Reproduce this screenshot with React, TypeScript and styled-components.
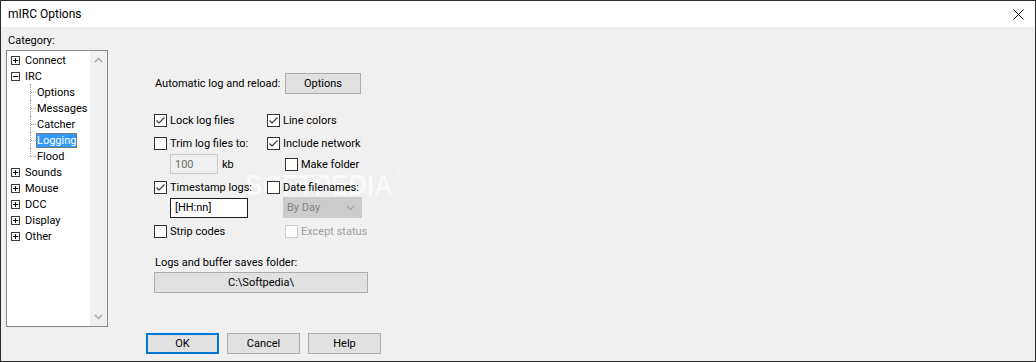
import React from 'react';
import styled, { createGlobalStyle } from 'styled-components';

const GlobalStyle = createGlobalStyle`
    html, body {
        margin: 0;
        padding: 0;
        background: #f0f0f0;
    }
`;

const Window = styled.div`
    position: relative;
    width: 1036px;
    height: 362px;
    box-sizing: border-box;
    border: 1px solid #2b2b2b;
    background: #f0f0f0;
    display: flex;
    flex-direction: column;
    font-family: Roboto, 'Noto Sans', sans-serif;
    font-size: 11px;
    color: #000;
    overflow: hidden;
`;

const TitleBar = styled.div`
    height: 26px;
    background: #fff;
    display: flex;
    align-items: center;
    justify-content: space-between;
    padding-left: 7px;
    flex-shrink: 0;
`;

const Title = styled.span`
    font-size: 12px;
`;

const CloseButton = styled.div`
    width: 46px;
    height: 26px;
    display: flex;
    align-items: center;
    justify-content: center;
    margin-right: -6px;
`;

const Body = styled.div`
    position: relative;
    z-index: 1;
    flex: 1;
    display: flex;
    flex-direction: column;
`;

const Main = styled.div`
    display: flex;
    height: 300px;
`;

const LeftCol = styled.div`
    width: 102px;
    padding: 6px 0 0 5px;
    display: flex;
    flex-direction: column;
`;

const CategoryLabel = styled.div`
    height: 16px;
    line-height: 16px;
    padding-left: 2px;
    margin-bottom: 1px;
`;

const TreeBox = styled.div`
    height: 277px;
    box-sizing: border-box;
    border: 1px solid #828790;
    background: #fff;
    display: flex;
`;

const TreeList = styled.div`
    flex: 1;
    padding-top: 1px;
    display: flex;
    flex-direction: column;
`;

const TreeRow = styled.div`
    height: 16px;
    display: flex;
    align-items: center;
`;

const Expander = styled.svg`
    margin-left: 4px;
    flex-shrink: 0;
`;

const Connector = styled.span<{ $last?: boolean }>`
    position: relative;
    align-self: flex-start;
    margin-left: 23px;
    width: 6px;
    height: ${(p) => (p.$last ? '8px' : '16px')};
    border-left: 1px dotted #a0a0a0;
    box-sizing: border-box;
    &::after {
        content: '';
        position: absolute;
        left: 0;
        top: 8px;
        width: 5px;
        border-top: 1px dotted #a0a0a0;
    }
`;

const TreeLabel = styled.span<{ $selected?: boolean; $root?: boolean }>`
    margin-left: ${(p) => (p.$root ? '4px' : '0')};
    padding: 0 1px;
    height: 15px;
    line-height: 15px;
    box-sizing: border-box;
    white-space: nowrap;
    background: ${(p) => (p.$selected ? '#3399ff' : 'transparent')};
    color: ${(p) => (p.$selected ? '#fff' : '#000')};
    outline: ${(p) => (p.$selected ? '1px dotted #b0620d' : 'none')};
    outline-offset: -1px;
`;

const ScrollBar = styled.div`
    width: 17px;
    background: #f0f0f0;
    display: flex;
    flex-direction: column;
    justify-content: space-between;
    align-items: center;
    padding: 6px 0;
`;

const RightPane = styled.div`
    margin-left: 46px;
    padding-top: 46px;
    display: flex;
    flex-direction: column;
    width: 240px;
`;

const Row = styled.div<{ $mt?: number; $h?: number }>`
    margin-top: ${(p) => p.$mt ?? 0}px;
    height: ${(p) => p.$h ?? 20}px;
    display: grid;
    grid-template-columns: 113px 1fr;
    align-items: center;
`;

const Cell = styled.div<{ $indent?: number }>`
    display: flex;
    align-items: center;
    padding-left: ${(p) => p.$indent ?? 0}px;
    white-space: nowrap;
`;

const PlainText = styled.div<{ $mt?: number }>`
    margin-top: ${(p) => p.$mt ?? 0}px;
    height: 16px;
    line-height: 16px;
    padding-left: 1px;
    white-space: nowrap;
`;

const Box = styled.span<{ $disabled?: boolean }>`
    width: 13px;
    height: 13px;
    box-sizing: border-box;
    border: 1px solid ${(p) => (p.$disabled ? '#cccccc' : '#333333')};
    background: #fff;
    display: inline-flex;
    align-items: center;
    justify-content: center;
    flex-shrink: 0;
`;

const CheckText = styled.span<{ $disabled?: boolean }>`
    margin-left: 3px;
    color: ${(p) => (p.$disabled ? '#a0a0a0' : '#000')};
`;

const Button = styled.div<{ $w: number; $default?: boolean }>`
    width: ${(p) => p.$w}px;
    height: 21px;
    box-sizing: border-box;
    background: #e1e1e1;
    border: ${(p) => (p.$default ? '2px solid #0078d7' : '1px solid #adadad')};
    display: flex;
    align-items: center;
    justify-content: center;
    white-space: nowrap;
`;

const TextInput = styled.div<{ $w: number; $disabled?: boolean }>`
    width: ${(p) => p.$w}px;
    height: 20px;
    box-sizing: border-box;
    border: 1px solid ${(p) => (p.$disabled ? '#cccccc' : '#1e1e1e')};
    background: ${(p) => (p.$disabled ? '#f0f0f0' : '#fff')};
    color: ${(p) => (p.$disabled ? '#6d6d6d' : '#000')};
    display: flex;
    align-items: center;
    padding-left: 4px;
`;

const Unit = styled.span`
    margin-left: 4px;
`;

const Select = styled.div`
    width: 79px;
    height: 21px;
    box-sizing: border-box;
    margin-left: 16px;
    background: #cccccc;
    border: 1px solid #cccccc;
    color: #838383;
    display: flex;
    align-items: center;
    justify-content: space-between;
    padding: 0 6px 0 3px;
`;

const Footer = styled.div`
    margin-top: 6px;
    padding-left: 145px;
    display: flex;
    gap: 8px;
`;

const Watermark = styled.div`
    position: absolute;
    z-index: 0;
    left: 244px;
    top: 169px;
    font-family: 'Liberation Sans', Arial, sans-serif;
    font-weight: bold;
    font-size: 30px;
    line-height: 30px;
    white-space: nowrap;
    color: rgba(255, 255, 255, 0.85);
    text-shadow: 0 0 1px rgba(0, 0, 0, 0.08);
    transform: scaleX(0.86);
    transform-origin: left top;
    pointer-events: none;
`;

const Reg = styled.span`
    font-size: 10px;
    vertical-align: top;
    line-height: 10px;
    margin-left: 3px;
`;

const PlusBox = ({ open }: { open?: boolean }) => (
    <Expander width="9" height="9" viewBox="0 0 9 9">
        <rect x="0.5" y="0.5" width="8" height="8" fill="#fff" stroke="#3c3c3c" />
        <line x1="2" y1="4.5" x2="7" y2="4.5" stroke="#000" />
        {!open && <line x1="4.5" y1="2" x2="4.5" y2="7" stroke="#000" />}
    </Expander>
);

const Check = ({
    checked,
    disabled,
    label,
}: {
    checked?: boolean;
    disabled?: boolean;
    label: string;
}) => (
    <>
        <Box $disabled={disabled}>
            {checked && (
                <svg width="11" height="11" viewBox="0 0 11 11">
                    <polyline
                        points="1.5,5.5 4,8 9.5,2.5"
                        fill="none"
                        stroke="#333"
                        strokeWidth="1.1"
                    />
                </svg>
            )}
        </Box>
        <CheckText $disabled={disabled}>{label}</CheckText>
    </>
);

const Chevron = ({ up, color }: { up?: boolean; color: string }) => (
    <svg width="9" height="6" viewBox="0 0 9 6">
        <polyline
            points={up ? '1,5 4.5,1.5 8,5' : '1,1 4.5,4.5 8,1'}
            fill="none"
            stroke={color}
            strokeWidth="1.4"
        />
    </svg>
);

const roots = ['Sounds', 'Mouse', 'DCC', 'Display', 'Other'];
const ircChildren = ['Options', 'Messages', 'Catcher', 'Logging', 'Flood'];

const App = () => {
    return (
        <>
            <GlobalStyle />
            <Window>
                <TitleBar>
                    <Title>mIRC Options</Title>
                    <CloseButton>
                        <svg width="11" height="11" viewBox="0 0 11 11">
                            <path d="M0.5 0.5 L10.5 10.5 M10.5 0.5 L0.5 10.5" stroke="#000" strokeWidth="1" />
                        </svg>
                    </CloseButton>
                </TitleBar>
                <Watermark>
                    SOFTPEDIA<Reg>®</Reg>
                </Watermark>
                <Body>
                    <Main>
                        <LeftCol>
                            <CategoryLabel>Category:</CategoryLabel>
                            <TreeBox>
                                <TreeList>
                                    <TreeRow>
                                        <PlusBox />
                                        <TreeLabel $root>Connect</TreeLabel>
                                    </TreeRow>
                                    <TreeRow>
                                        <PlusBox open />
                                        <TreeLabel $root>IRC</TreeLabel>
                                    </TreeRow>
                                    {ircChildren.map((c, i) => (
                                        <TreeRow key={c}>
                                            <Connector $last={i === ircChildren.length - 1} />
                                            <TreeLabel $selected={c === 'Logging'}>{c}</TreeLabel>
                                        </TreeRow>
                                    ))}
                                    {roots.map((r) => (
                                        <TreeRow key={r}>
                                            <PlusBox />
                                            <TreeLabel $root>{r}</TreeLabel>
                                        </TreeRow>
                                    ))}
                                </TreeList>
                                <ScrollBar>
                                    <Chevron up color="#a3a3a3" />
                                    <Chevron color="#a3a3a3" />
                                </ScrollBar>
                            </TreeBox>
                        </LeftCol>
                        <RightPane>
                            <Row>
                                <Cell>
                                    <PlainText>Automatic log and reload:</PlainText>
                                </Cell>
                                <Cell $indent={18}>
                                    <Button $w={76}>Options</Button>
                                </Cell>
                            </Row>
                            <Row $mt={17}>
                                <Cell>
                                    <Check checked label="Lock log files" />
                                </Cell>
                                <Cell>
                                    <Check checked label="Line colors" />
                                </Cell>
                            </Row>
                            <Row $mt={3}>
                                <Cell>
                                    <Check label="Trim log files to:" />
                                </Cell>
                                <Cell>
                                    <Check checked label="Include network" />
                                </Cell>
                            </Row>
                            <Row $mt={1}>
                                <Cell $indent={16}>
                                    <TextInput $w={48} $disabled>
                                        100
                                    </TextInput>
                                    <Unit>kb</Unit>
                                </Cell>
                                <Cell $indent={18}>
                                    <Check label="Make folder" />
                                </Cell>
                            </Row>
                            <Row $mt={3}>
                                <Cell>
                                    <Check checked label="Timestamp logs:" />
                                </Cell>
                                <Cell>
                                    <Check label="Date filenames:" />
                                </Cell>
                            </Row>
                            <Row>
                                <Cell $indent={16}>
                                    <TextInput $w={78}>[HH:nn]</TextInput>
                                </Cell>
                                <Cell>
                                    <Select>
                                        <span>By Day</span>
                                        <Chevron color="#a8a8a8" />
                                    </Select>
                                </Cell>
                            </Row>
                            <Row $mt={4}>
                                <Cell>
                                    <Check label="Strip codes" />
                                </Cell>
                                <Cell $indent={18}>
                                    <Check disabled label="Except status" />
                                </Cell>
                            </Row>
                            <PlainText $mt={14}>Logs and buffer saves folder:</PlainText>
                            <Row $mt={1} $h={21}>
                                <Button $w={214}>C:\Softpedia\</Button>
                            </Row>
                        </RightPane>
                    </Main>
                    <Footer>
                        <Button $w={73} $default>
                            OK
                        </Button>
                        <Button $w={73}>Cancel</Button>
                        <Button $w={73}>Help</Button>
                    </Footer>
                </Body>
            </Window>
        </>
    );
};

export default App;
